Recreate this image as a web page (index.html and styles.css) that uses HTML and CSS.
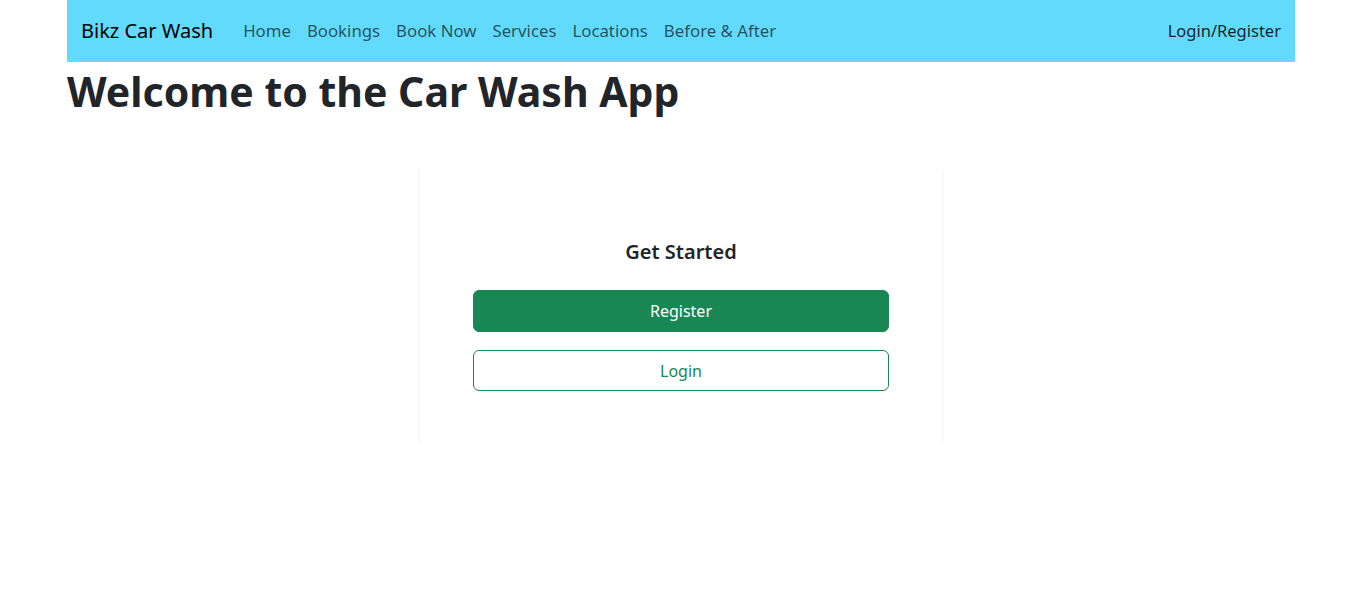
FILE: index.html
```html
<!DOCTYPE html>
<html lang="en">
<head>
<meta charset="utf-8">
<title>Bikz Car Wash</title>
<link rel="stylesheet" href="styles.css">
</head>
<body>
<div class="container">
  <nav class="navbar">
    <a class="brand" href="#">Bikz Car Wash</a>
    <ul class="nav-links">
      <li><a class="nav-link" href="#">Home</a></li>
      <li><a class="nav-link" href="#">Bookings</a></li>
      <li><a class="nav-link" href="#">Book Now</a></li>
      <li><a class="nav-link" href="#">Services</a></li>
      <li><a class="nav-link" href="#">Locations</a></li>
      <li><a class="nav-link" href="#">Before &amp; After</a></li>
    </ul>
    <a class="nav-link nav-auth" href="#">Login/Register</a>
  </nav>
  <h1 class="page-title">Welcome to the Car Wash App</h1>
  <div class="card-wrap">
    <div class="card">
      <h5 class="card-title">Get Started</h5>
      <button class="btn btn-primary">Register</button>
      <button class="btn btn-outline">Login</button>
    </div>
  </div>
</div>
</body>
</html>
```
FILE: styles.css
```css
* { box-sizing: border-box; }
html, body { margin: 0; padding: 0; }
body {
  font-family: "Noto Sans", "Open Sans", sans-serif;
  color: #212529;
  background: #fff;
  font-size: 16px;
  line-height: 1.5;
}
.container {
  width: 1228px;
  margin: 0 0 0 67px;
}
.navbar {
  height: 62px;
  background: #61dafb;
  display: flex;
  align-items: center;
  padding: 0 14px 0 14px;
}
.brand {
  font-size: 20px;
  color: #000;
  text-decoration: none;
  margin-right: 22px;
  white-space: nowrap;
}
.nav-links {
  list-style: none;
  margin: 0;
  padding: 0;
  display: flex;
  flex: 1;
}
.nav-link {
  display: block;
  padding: 0 8px;
  color: rgba(0,0,0,0.65);
  text-decoration: none;
  font-size: 16.8px;
  white-space: nowrap;
}
.nav-auth {
  padding: 0;
  font-size: 16.5px;
  color: rgba(0,0,0,0.85);
}
.page-title {
  margin: 5px 0 0;
  font-size: 41px;
  font-weight: 700;
  line-height: 48px;
}
.card-wrap {
  display: flex;
  justify-content: center;
  padding-top: 52px;
}
.card {
  width: 522px;
  background: #fff;
  border-radius: 3px;
  box-shadow: 0 2px 4px rgba(0,0,0,0.08);
  padding: 73px 53px 52px;
  display: flex;
  flex-direction: column;
}
.card-title {
  margin: 0 0 26px;
  font-size: 20px;
  font-weight: 600;
  line-height: 24px;
  text-align: center;
}
.btn {
  font-family: inherit;
  font-size: 16px;
  line-height: 24px;
  padding: 8px 12px;
  border-radius: 6px;
  border: 1px solid #198754;
  width: 100%;
  cursor: pointer;
}
.btn-primary {
  background: #198754;
  color: #fff;
  margin-bottom: 18px;
}
.btn-outline {
  background: #fff;
  color: #198754;
  padding: 7.5px 12px;
}
```
